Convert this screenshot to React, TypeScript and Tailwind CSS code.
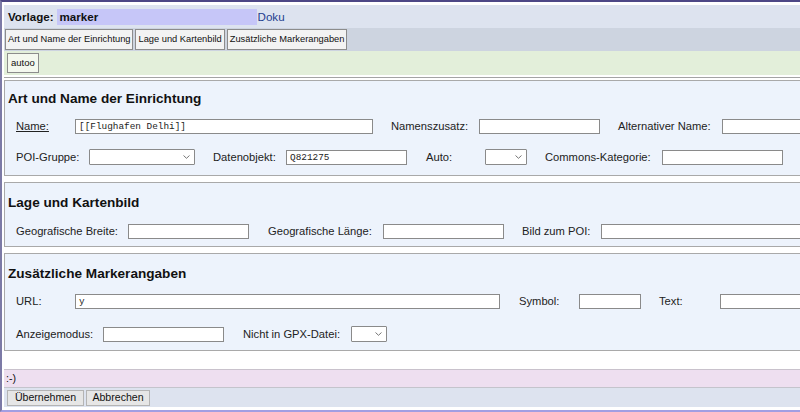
import React from 'react';

const Input = ({ w, value = '' }: { w: number; value?: string }) => (
  <div
    className="h-[15px] shrink-0 border border-[#8a8a8a] bg-white pl-[3px] font-['Liberation_Mono'] text-[9.4px] leading-[13px] text-[#222]"
    style={{ width: w }}
  >
    {value}
  </div>
);

const Select = ({ w }: { w: number }) => (
  <div
    className="flex h-[16px] shrink-0 items-center justify-end rounded-[1px] border border-[#8a8a8a] bg-white pr-[4px]"
    style={{ width: w }}
  >
    <svg width="7" height="4" viewBox="0 0 7 4">
      <path d="M0.5 0.5 L3.5 3.3 L6.5 0.5" fill="none" stroke="#666" strokeWidth="0.9" />
    </svg>
  </div>
);

const Label = ({ w, children, u }: { w: number; children: React.ReactNode; u?: boolean }) => (
  <span className={`shrink-0 text-[11.2px] text-[#222] ${u ? 'underline' : ''}`} style={{ width: w }}>
    {children}
  </span>
);

const Section = ({ title, pt, children }: { title: string; pt: string; children: React.ReactNode }) => (
  <div className={`w-[900px] border border-[#a9a9a9] bg-[#edf3fc] pl-[11px] ${pt}`}>
    <div className="-ml-[8px] h-[18px] text-[13.6px] font-bold leading-[18px] text-[#111]">{title}</div>
    {children}
  </div>
);

export default function App() {
  return (
    <div className="h-[412px] w-[800px] overflow-hidden border-b-[2px] border-l-[2px] border-t-[2px] border-b-[#a29ee2] border-l-[#7c7aa6] border-t-[#4d4785] bg-white font-['Liberation_Sans',Arial,sans-serif]">
      <div className="pl-[2px] pt-[3px]">
        {/* Kopfzeile */}
        <div className="flex h-[23px] items-center bg-[#dde3ef] pl-[4px]">
          <span className="text-[11.6px] font-bold text-[#111]">Vorlage:</span>
          <div className="ml-[3px] h-[16px] w-[200px] bg-[#c6c6f8] pl-[3px] text-[11.6px] font-bold leading-[16px] text-[#111]">marker</div>
          <span className="ml-[1px] text-[11.6px] text-[#1f3f8f]">Doku</span>
        </div>

        {/* Reiter */}
        <div className="flex h-[23px] items-center gap-[2px] bg-[#cdd4e0] pl-[1px]">
          {['Art und Name der Einrichtung', 'Lage und Kartenbild', 'Zusätzliche Markerangaben'].map((t) => (
            <div key={t} className="flex h-[21px] items-center border border-[#8c8c8c] bg-[#f3f3f3] px-[2px] text-[9.3px] text-[#111]">
              {t}
            </div>
          ))}
        </div>

        <div className="flex h-[24px] items-center bg-[#e3efda] pl-[3px]">
          <div className="flex h-[20px] items-center border border-[#8c8c8c] bg-[#f4f8ee] px-[3px] text-[9.5px] text-[#111]">autoo</div>
        </div>
        <div className="mt-[2px] h-[1px] bg-[#a4a4a4]" />

        <div className="mt-[2px] flex flex-col gap-[6px]">
          <Section title="Art und Name der Einrichtung" pt="pt-[9px]">
            <div className="mt-[10px] flex h-[16px] items-center">
              <Label w={59} u>Name:</Label>
              <Input w={298} value="[[Flughafen Delhi]]" />
              <span className="w-[18px]" />
              <Label w={88}>Namenszusatz:</Label>
              <Input w={121} />
              <span className="w-[18px]" />
              <Label w={104}>Alternativer Name:</Label>
              <Input w={121} />
            </div>
            <div className="mt-[15px] flex h-[16px] items-center">
              <Label w={73}>POI-Gruppe:</Label>
              <Select w={106} />
              <span className="w-[18px]" />
              <Label w={73}>Datenobjekt:</Label>
              <Input w={121} value="Q821275" />
              <span className="w-[19px]" />
              <Label w={59}>Auto:</Label>
              <Select w={42} />
              <span className="w-[18px]" />
              <Label w={117}>Commons-Kategorie:</Label>
              <Input w={121} />
            </div>
            <div className="h-[10px]" />
          </Section>

          <Section title="Lage und Kartenbild" pt="pt-[11px]">
            <div className="mt-[11px] flex h-[16px] items-center">
              <Label w={112}>Geografische Breite:</Label>
              <Input w={121} />
              <span className="w-[19px]" />
              <Label w={115}>Geografische Länge:</Label>
              <Input w={121} />
              <span className="w-[18px]" />
              <Label w={79}>Bild zum POI:</Label>
              <Input w={250} />
            </div>
            <div className="h-[7px]" />
          </Section>

          <Section title="Zusätzliche Markerangaben" pt="pt-[11px]">
            <div className="mt-[10px] flex h-[16px] items-center">
              <Label w={59}>URL:</Label>
              <Input w={425} value="y" />
              <span className="w-[19px]" />
              <Label w={60}>Symbol:</Label>
              <Input w={62} />
              <span className="w-[18px]" />
              <Label w={61}>Text:</Label>
              <Input w={121} />
            </div>
            <div className="mt-[17px] flex h-[16px] items-center">
              <Label w={87}>Anzeigemodus:</Label>
              <Input w={121} />
              <span className="w-[19px]" />
              <Label w={108}>Nicht in GPX-Datei:</Label>
              <Select w={36} />
            </div>
            <div className="h-[8px]" />
          </Section>
        </div>

        <div className="mt-[18px] flex h-[18px] items-center border-t border-[#c9c2cc] bg-[#eedff0] pl-[2px] text-[10.6px] text-[#111]">
          :-)
        </div>
        <div className="flex h-[20px] items-center gap-[2px] border-t border-[#c4c4cc] bg-[#dde3ef] pl-[3px]">
          <div className="flex h-[16px] w-[77px] items-center justify-center border border-[#b4b4b4] bg-[#e6e6e6] text-[10.6px] text-[#111]">Übernehmen</div>
          <div className="flex h-[16px] w-[64px] items-center justify-center border border-[#b4b4b4] bg-[#e6e6e6] text-[10.6px] text-[#111]">Abbrechen</div>
        </div>
      </div>
    </div>
  );
}
